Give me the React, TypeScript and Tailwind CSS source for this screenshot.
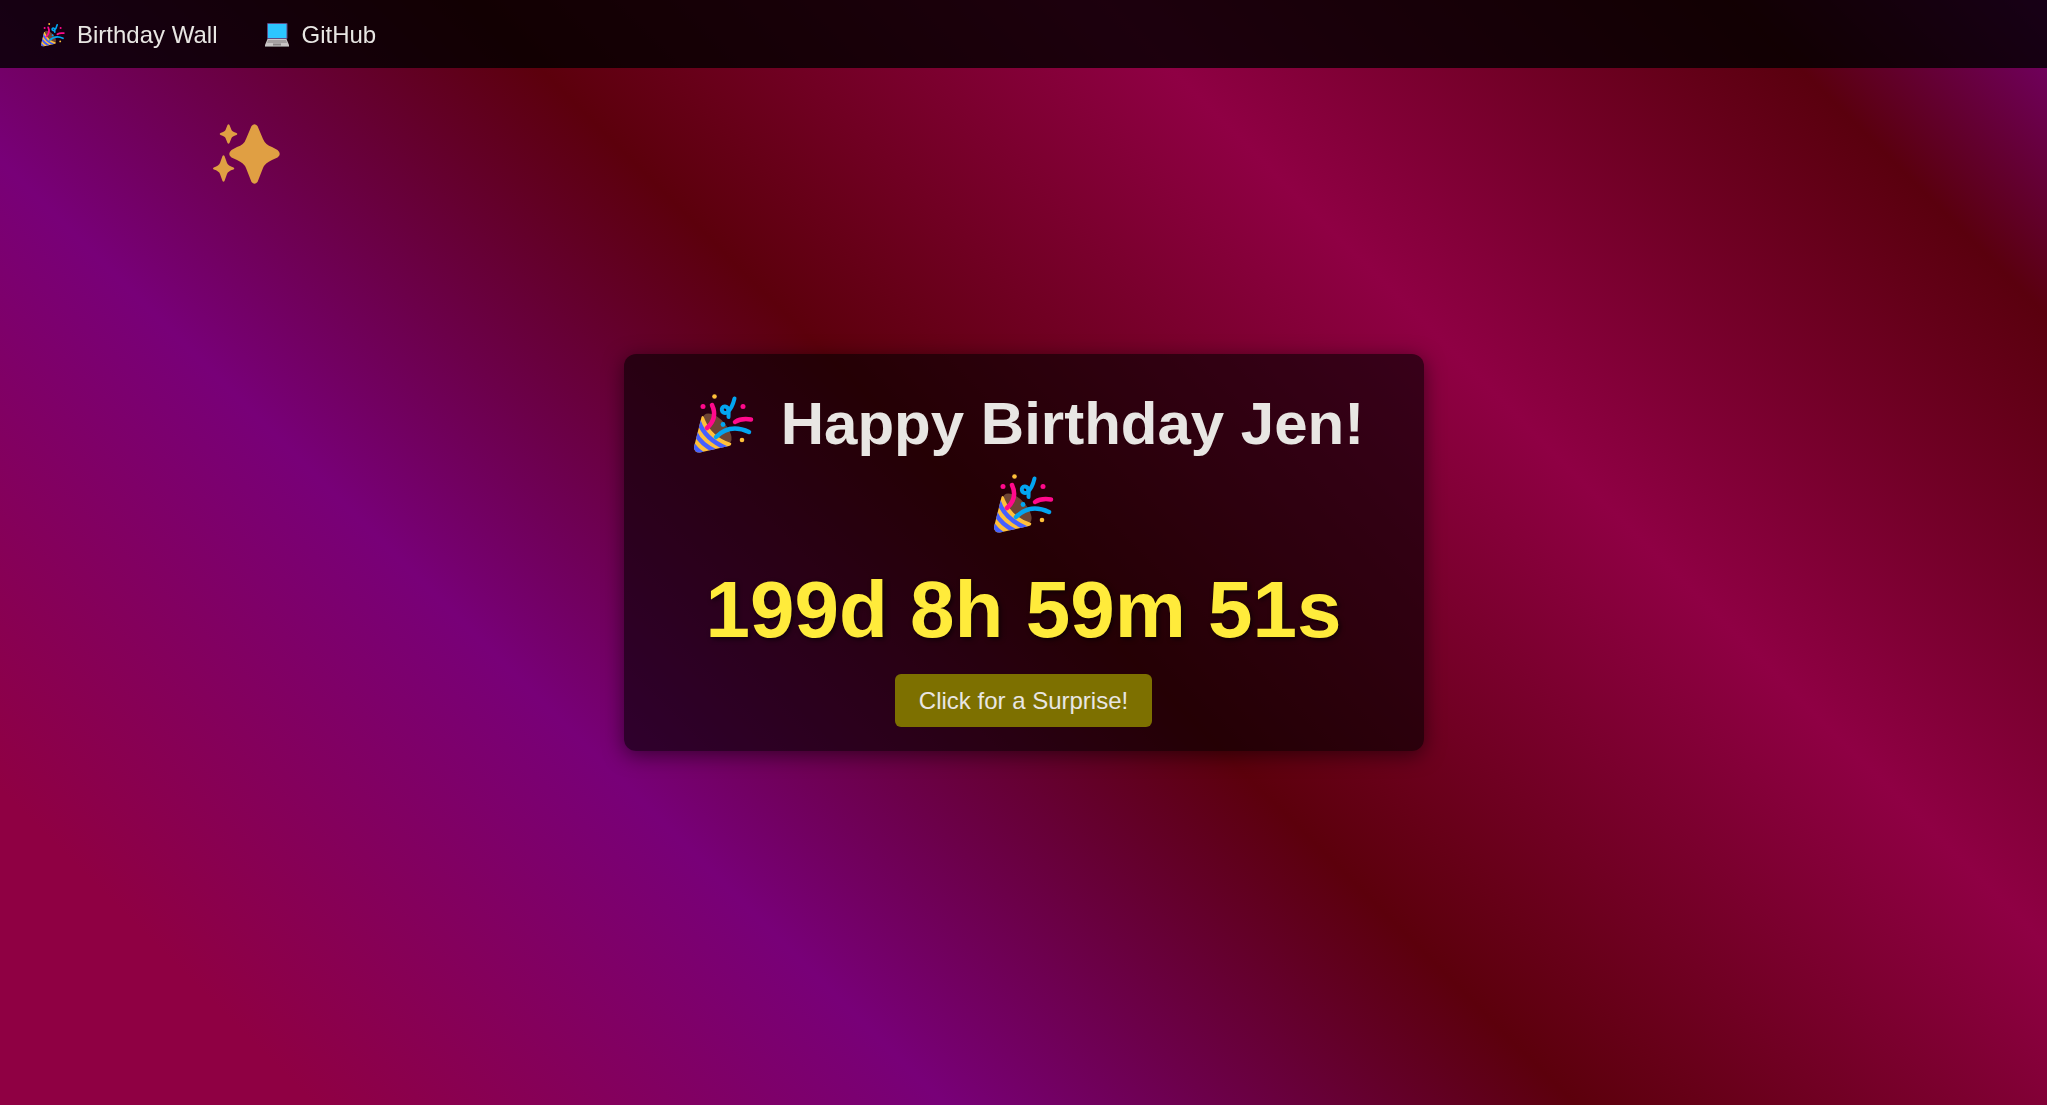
import React, { useId } from "react";

function Party({ className }: { className: string }) {
  const cone = useId();
  return (
    <svg viewBox="0 0 60 60" className={className} aria-hidden="true" fill="none" strokeLinecap="round">
      <clipPath id={cone}>
        <path d="M7.500 23Q9 20 11 26Q18 43 37 49Q38 51 35 52L6 58.500Q0 59 0 53Z" />
      </clipPath>
      <ellipse cx="23" cy="35" rx="9.500" ry="19" transform="rotate(-42 23 35)" fill="#6d4534" />
      <g clipPath={`url(#${cone})`}>
        <path d="M0 18H40V60H0Z" fill="#ffc03a" />
        <path d="M5 28Q11 45 32 54M1 38Q6 50 23 58M-3 48Q2 56 10 61" stroke="#4460ff" strokeWidth="4.500" />
      </g>
      <path d="M18 11Q24 24 13 34" stroke="#ff0a8c" strokeWidth="4.500" />
      <path d="M41 28Q47 24 57 25.500" stroke="#ff0a8c" strokeWidth="4.500" />
      <path d="M22 43Q36 29 55 38" stroke="#03a5f0" strokeWidth="4.500" />
      <path d="M40.500 4.500Q38 15 33 18.500C27 21 26 12 31 12.500C35 13 35 17 34.500 23" stroke="#03a5f0" strokeWidth="4" />
      <circle cx="20.500" cy="2.500" r="2.300" fill="#ffc03a" />
      <circle cx="48" cy="46" r="2.300" fill="#ffc03a" />
      <circle cx="9" cy="12.500" r="2.500" fill="#ff0a8c" />
      <circle cx="49" cy="12.500" r="2.500" fill="#ff0a8c" />
      <circle cx="29" cy="30.500" r="2.400" fill="#03a5f0" />
    </svg>
  );
}

function Laptop({ className }: { className: string }) {
  return (
    <svg viewBox="0 0 24 24" className={className} aria-hidden="true">
      <rect x="2" y="0" width="20.500" height="16" rx="1" fill="#5d4d86" />
      <rect x="3" y="1" width="18.500" height="14" fill="#2cc6ff" />
      <path d="M2.500 16H21.500L24 22V24H0V22Z" fill="#c8c5c5" />
      <path d="M3 17H21L22 20H2Z" fill="#a5a1a2" />
      <path d="M8 20.500H16V22.500H8Z" fill="#8b8788" />
      <path d="M0 23H24V24H0Z" fill="#767274" />
    </svg>
  );
}

function Sparkles({ className }: { className: string }) {
  return (
    <svg viewBox="0 0 67 60" className={className} aria-hidden="true" fill="#e09f43">
      <path d="M38.500 2Q41.500-1.500 44.500 2L50 15Q52.500 21 59 23L64.500 26Q69 30 64.500 33.500L59 36Q52 39 50 44L44.500 58Q41.500 61.500 38.500 58L33 44Q31 39 24 36L18.500 33.500Q14 30 18.500 26L24 23Q31 21 33 15Z" />
      <path d="M14.500 1Q15.500-.5 16.500 1L18.500 6Q19 7.500 23.500 9Q25 10 23.500 11Q19 12.500 18.500 14L16.500 19Q15.500 20.500 14.500 19L12.500 14Q12 12.500 7.500 11Q6 10 7.500 9Q12 7.500 12.500 6Z" />
      <path d="M9.500 32Q10.500 30.500 11.500 32L14 39Q15 41.500 20.500 43.500Q22 44.500 20.500 45.500Q15 47 14 50L11.500 57Q10.500 58.500 9.500 57L7 50Q6 47 .8 45.500Q-.8 44.500 .8 43.500Q6 41.500 7 39Z" />
    </svg>
  );
}

function TitleEmoji() {
  return (
    <span className="flex h-20 w-[82px] items-center justify-center">
      <Party className="size-[60px]" />
    </span>
  );
}

export default function App() {
  return (
    <div className="relative bg-[linear-gradient(45deg,#8f0043_10%,#780078_30%,#5c000c_50%,#8f0044_70%,#5a000e_90%,#750070_100%)] font-['Liberation_Sans',Arial,sans-serif] text-[#e8e6e3]">
      <header className="fixed inset-x-0 top-0 bg-black/80">
        <nav className="flex items-center gap-12 px-[41px] pt-[17px] pb-[15px] text-2xl leading-9">
          <a href="#wall" className="flex items-center gap-3">
            <Party className="size-6" />
            Birthday Wall
          </a>
          <a href="#github" className="flex items-center gap-3">
            <Laptop className="size-6" />
            GitHub
          </a>
        </nav>
      </header>
      <Sparkles className="absolute left-[213px] top-[124px] h-[60px] w-[67px]" />
      <main className="flex min-h-screen items-center justify-center">
        <section className="flex w-full max-w-[800px] flex-col items-center rounded-xl bg-black/60 px-12 pt-[30px] pb-6 shadow-[0_4px_20px_rgba(0,0,0,0.5)]">
          <h1 className="flex flex-wrap items-center justify-center gap-x-4 text-[60px] leading-[80px] font-bold">
            <TitleEmoji />
            Happy Birthday Jen!
            <TitleEmoji />
          </h1>
          <p className="mt-[18px] text-[80px] leading-[96px] font-bold text-[#ffeb3b] [text-shadow:2px_2px_5px_rgba(0,0,0,0.6)]">
            199d 8h 59m 51s
          </p>
          <button type="button" className="mt-4 rounded-md bg-[#7d7000] px-6 py-3 text-2xl leading-[29px]">
            Click for a Surprise!
          </button>
        </section>
      </main>
    </div>
  );
}
